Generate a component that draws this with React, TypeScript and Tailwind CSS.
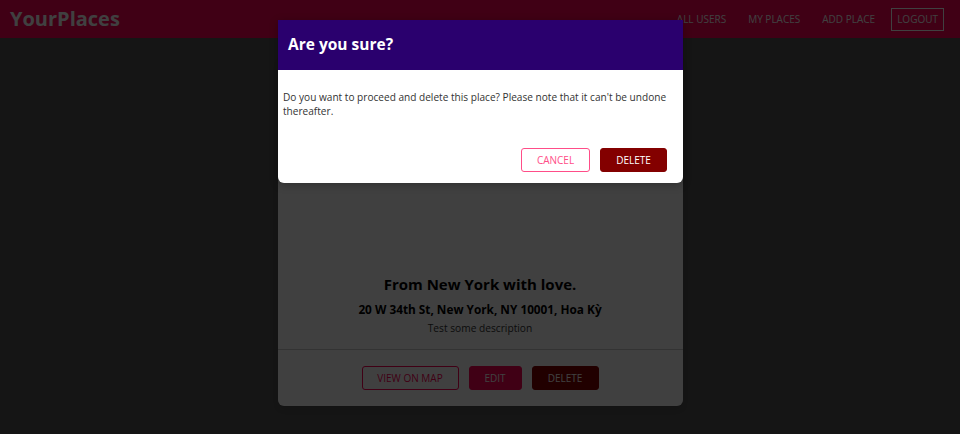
import React from "react";

export default function App() {
  const font = { fontFamily: "'Open Sans', 'Noto Sans', sans-serif" };
  return (
    <div className="relative w-[960px] h-[434px] overflow-hidden bg-[#535353]" style={font}>
      <header className="h-[38px] bg-[#ff0055] flex items-center justify-between pl-[10px] pr-[16px]">
        <h1 className="text-white font-bold text-[20px] leading-none">YourPlaces</h1>
        <nav className="flex items-center text-white text-[10px]">
          <a className="px-[11px]">ALL USERS</a>
          <a className="px-[11px]">MY PLACES</a>
          <a className="px-[11px]">ADD PLACE</a>
          <button className="ml-[5px] border border-white px-[5px] h-[23px] text-[10px]">LOGOUT</button>
        </nav>
      </header>

      <main className="flex justify-center pt-[18px]">
        <div className="w-[405px] bg-white rounded-[6px] shadow-md overflow-hidden">
          <div className="h-[204px]" />
          <div className="px-4 pt-[14px] pb-[14px] text-center">
            <h2 className="text-[15px] font-bold text-black leading-[20px]">From New York with love.</h2>
            <h3 className="text-[11.8px] font-bold text-black leading-[16px] mt-[7px]">20 W 34th St, New York, NY 10001, Hoa Kỳ</h3>
            <p className="text-[10.2px] text-[#333] leading-[14px] mt-[4px]">Test some description</p>
          </div>
          <div className="border-t border-[#cccccc] py-4 flex justify-center gap-[10px]">
            <button className="h-[24px] w-[97px] border border-[#ff0055] rounded-[3px] text-[#ff0055] text-[10px]">VIEW ON MAP</button>
            <button className="h-[24px] w-[53px] border border-[#ff0055] bg-[#ff0055] rounded-[3px] text-white text-[10px]">EDIT</button>
            <button className="h-[24px] w-[67px] border border-[#830000] bg-[#830000] rounded-[3px] text-white text-[10px]">DELETE</button>
          </div>
        </div>
      </main>

      <div className="absolute inset-0 bg-black/75" />

      <div className="absolute left-[278px] top-[20px] w-[405px] bg-white rounded-b-[6px] shadow-[0_2px_8px_rgba(0,0,0,0.26)] overflow-hidden">
        <div className="h-[50px] bg-[#2a006e] flex items-center px-[10px]">
          <h2 className="text-white font-bold text-[15.5px]">Are you sure?</h2>
        </div>
        <div className="px-[5px] pt-[20px] pb-[30px]">
          <p className="text-[10.1px] leading-[14px] text-[#333]">
            Do you want to proceed and delete this place? Please note that it can't be undone thereafter.
          </p>
        </div>
        <div className="flex justify-end gap-[10px] pr-[16px] pb-[11px]">
          <button className="h-[24px] w-[69px] border border-[#ff4d88] rounded-[3px] text-[#ff4d88] text-[10px]">CANCEL</button>
          <button className="h-[24px] w-[67px] border border-[#830000] bg-[#830000] rounded-[3px] text-white text-[10px]">DELETE</button>
        </div>
      </div>
    </div>
  );
}
